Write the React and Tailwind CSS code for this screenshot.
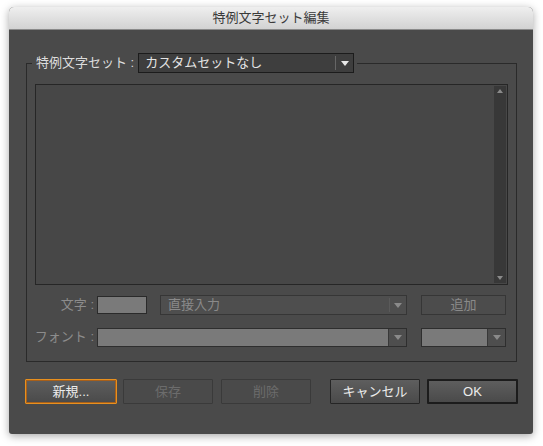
import React from 'react';

const font = { fontFamily: '"Liberation Sans", "Noto Sans CJK JP", sans-serif' };

function Arrow({ className = 'border-t-[#c8c8c8]' }) {
  return <span className={`block w-0 h-0 border-l-[4px] border-r-[4px] border-t-[5px] border-l-transparent border-r-transparent ${className}`} />;
}

function Btn({ children, variant = 'normal', w = 'w-[90px]' }) {
  const styles = {
    normal: 'border border-[#252525] bg-gradient-to-b from-[#5e5e5e] to-[#4a4a4a] text-[#ececec]',
    focus: 'border border-[#e8901f] outline outline-1 outline-[#a8601a] -outline-offset-2 bg-gradient-to-b from-[#5e5e5e] to-[#4a4a4a] text-[#ececec]',
    disabled: 'border border-[#3a3a3a] bg-[#4a4a4a] text-[#6c6c6c]',
    def: 'border-2 border-[#1c1c1c] bg-gradient-to-b from-[#5e5e5e] to-[#4a4a4a] text-[#ececec]',
  };
  return (
    <div className={`${w} h-[25px] flex items-center justify-center text-[13px] rounded-[1px] ${styles[variant]}`}>
      {children}
    </div>
  );
}

export default function App() {
  return (
    <div className="w-[543px] h-[446px] bg-white pt-[7px] pl-[9px]" style={font}>
      <div className="w-[524px] h-[427px] rounded-t-[5px] rounded-b-[3px] overflow-hidden shadow-[0_2px_8px_rgba(0,0,0,0.35)] flex flex-col bg-[#4a4a4a]">
        <div className="h-[23px] shrink-0 bg-gradient-to-b from-[#efefef] to-[#d2d2d2] border-b border-[#8a8a8a] flex items-center justify-center text-[13px] text-[#3a3a3a]">
          特例文字セット編集
        </div>

        <fieldset className="ml-[17px] mt-[23px] w-[491px] border border-[#2a2a2a] px-[8px] pb-[14px]">
          <legend className="-ml-[3px] pr-[3px] flex items-center">
            <span className="text-[13px] text-[#dcdcdc] pl-[4px] pr-[4px] whitespace-nowrap">特例文字セット :</span>
            <div className="w-[216px] h-[20px] border border-[#1c1c1c] bg-[#3e3e3e] flex items-center">
              <span className="flex-1 pl-[6px] text-[13px] text-[#e4e4e4]">カスタムセットなし</span>
              <div className="w-px h-[14px] bg-[#666]" />
              <div className="w-[17px] flex justify-center"><Arrow className="border-t-[#e8e8e8]" /></div>
            </div>
          </legend>

          <div className="mt-[11px] h-[201px] border border-[#262626] bg-[#474747] flex justify-end">
            <div className="w-[12px] my-px mr-px bg-[#383838] flex flex-col items-center justify-between py-[3px]">
              <span className="block w-0 h-0 border-l-[3px] border-r-[3px] border-b-[4px] border-l-transparent border-r-transparent border-b-[#8a8a8a]" />
              <span className="block w-0 h-0 border-l-[3px] border-r-[3px] border-t-[4px] border-l-transparent border-r-transparent border-t-[#8a8a8a]" />
            </div>
          </div>

          <div className="mt-[10px] flex items-center h-[20px]">
            <span className="w-[62px] flex justify-end pr-[3px] text-[13px] text-[#8c8c8c] whitespace-nowrap">文字 :</span>
            <div className="w-[50px] h-[18px] border border-[#2a2a2a] bg-[#7a7a7a]" />
            <div className="ml-[13px] w-[247px] h-[20px] border border-[#363636] bg-[#4e4e4e] flex items-center">
              <span className="flex-1 pl-[7px] text-[13px] text-[#8a8a8a]">直接入力</span>
              <div className="w-px h-[14px] bg-[#5a5a5a]" />
              <div className="w-[16px] flex justify-center"><Arrow className="border-t-[#8a8a8a]" /></div>
            </div>
            <div className="ml-[14px] w-[85px] h-[20px] border border-[#363636] bg-[#4c4c4c] flex items-center justify-center text-[13px] text-[#8a8a8a]">追加</div>
          </div>

          <div className="mt-[12px] flex items-center h-[20px]">
            <span className="w-[62px] flex justify-end pr-[3px] text-[13px] text-[#8c8c8c] whitespace-nowrap">フォント :</span>
            <div className="w-[310px] h-[19px] border border-[#2e2e2e] bg-[#4e4e4e] flex">
              <div className="flex-1 bg-[#7a7a7a]" />
              <div className="w-[18px] border-l border-[#383838] flex items-center justify-center"><Arrow className="border-t-[#8a8a8a]" /></div>
            </div>
            <div className="ml-[14px] w-[85px] h-[19px] border border-[#2e2e2e] bg-[#4e4e4e] flex">
              <div className="flex-1 bg-[#7a7a7a]" />
              <div className="w-[18px] border-l border-[#383838] flex items-center justify-center"><Arrow className="border-t-[#8a8a8a]" /></div>
            </div>
          </div>
        </fieldset>

        <div className="mt-[17px] ml-[16px] flex items-center">
          <Btn variant="focus" w="w-[92px]">新規...</Btn>
          <div className="ml-[6px]"><Btn variant="disabled">保存</Btn></div>
          <div className="ml-[8px]"><Btn variant="disabled">削除</Btn></div>
          <div className="ml-[19px]"><Btn>キャンセル</Btn></div>
          <div className="ml-[7px]"><Btn variant="def" w="w-[91px]">OK</Btn></div>
        </div>
      </div>
    </div>
  );
}
